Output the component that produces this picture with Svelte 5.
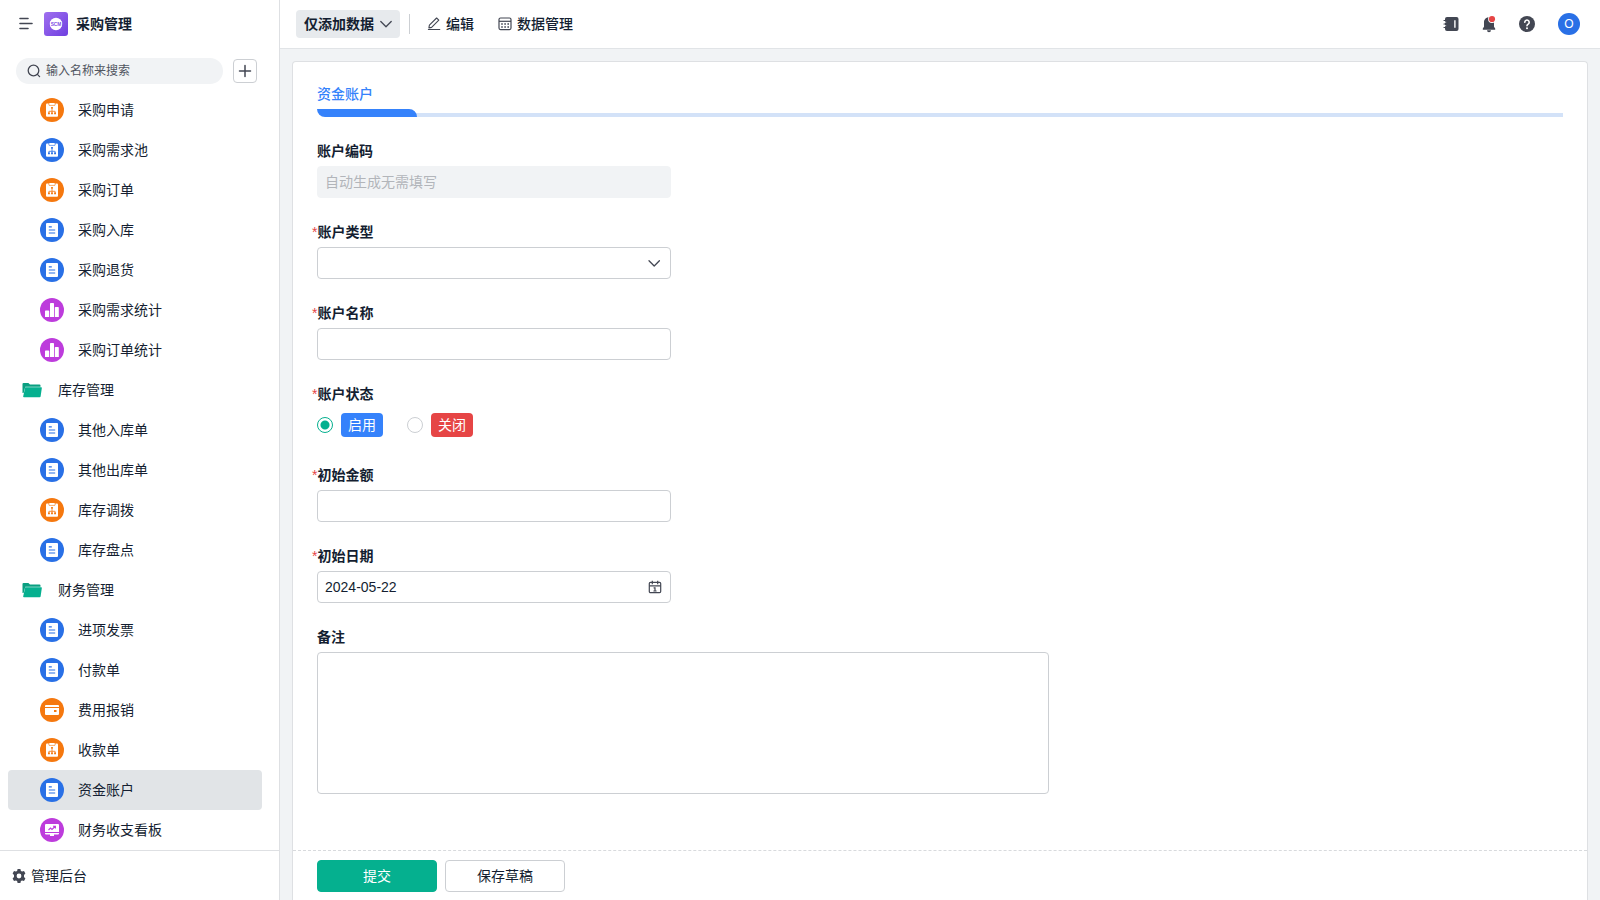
<script lang="ts">
  type IconName = 'flow' | 'form' | 'chart' | 'wallet' | 'board';
  type NavItem = { label: string; icon: IconName; color: string };
  type NavGroup = { label?: string; items: NavItem[] };

  const ORANGE = '#f5780f';
  const BLUE = '#2970e6';
  const PURPLE = '#bd3cdc';

  const groups: NavGroup[] = [
    {
      items: [
        { label: '采购申请', icon: 'flow', color: ORANGE },
        { label: '采购需求池', icon: 'flow', color: BLUE },
        { label: '采购订单', icon: 'flow', color: ORANGE },
        { label: '采购入库', icon: 'form', color: BLUE },
        { label: '采购退货', icon: 'form', color: BLUE },
        { label: '采购需求统计', icon: 'chart', color: PURPLE },
        { label: '采购订单统计', icon: 'chart', color: PURPLE }
      ]
    },
    {
      label: '库存管理',
      items: [
        { label: '其他入库单', icon: 'form', color: BLUE },
        { label: '其他出库单', icon: 'form', color: BLUE },
        { label: '库存调拨', icon: 'flow', color: ORANGE },
        { label: '库存盘点', icon: 'form', color: BLUE }
      ]
    },
    {
      label: '财务管理',
      items: [
        { label: '进项发票', icon: 'form', color: BLUE },
        { label: '付款单', icon: 'form', color: BLUE },
        { label: '费用报销', icon: 'wallet', color: ORANGE },
        { label: '收款单', icon: 'flow', color: ORANGE },
        { label: '资金账户', icon: 'form', color: BLUE },
        { label: '财务收支看板', icon: 'board', color: PURPLE }
      ]
    }
  ];

  const statusOptions = [
    { value: 'on', label: '启用', tone: 'blue' },
    { value: 'off', label: '关闭', tone: 'red' }
  ];

  let active = $state('资金账户');
  let keyword = $state('');
  let accountType = $state('');
  let accountName = $state('');
  let status = $state('on');
  let amount = $state('');
  let startDate = $state('2024-05-22');
  let remark = $state('');

  const visibleGroups = $derived(
    groups.map((group) => ({
      ...group,
      items: group.items.filter((item) => item.label.includes(keyword.trim()))
    }))
  );
</script>

{#snippet navIcon(name: IconName, color: string)}
  <svg class="nav-icon" viewBox="0 0 24 24" aria-hidden="true">
    <circle cx="12" cy="12" r="12" fill={color} />
    {#if name === 'flow'}
      <rect x="6" y="5.500" width="12" height="13.300" rx="1" fill="#fff" />
      <path fill="none" stroke={color} stroke-width=".8" d="M9 5v2.200h6V5" />
      <path fill="#fff" d="M9.400 5h5.200v1.800H9.400z" />
      <path fill="none" stroke={color} stroke-width=".8" d="M12 10.500v4.500M8.900 15v-1.700h6.200V15" />
      <path fill={color} d="M11.100 9h1.800v1.800h-1.800zM8 14.500h1.900v1.700H8zM11.050 14.500h1.900v1.700h-1.900zM14.100 14.500H16v1.700h-1.900z" />
    {:else if name === 'form'}
      <rect x="6" y="5" width="12" height="14" rx="1" fill="#fff" />
      <path stroke={color} stroke-width="1.200" d="M8.800 8.800h3M8.800 12h6.400M8.800 15h6.400" />
    {:else if name === 'chart'}
      <path fill="#fff" d="M5.800 12.500h2.600a.8.8 0 0 1 .8.800V19H5v-5.700a.8.8 0 0 1 .8-.8zM10.800 5h2.400a.8.8 0 0 1 .8.800V19h-4V5.800a.8.8 0 0 1 .8-.8zM15.600 9H18a.8.8 0 0 1 .8.800V19h-4V9.800a.8.8 0 0 1 .8-.8z" />
    {:else if name === 'wallet'}
      <path fill="#fff" d="M6 7h12a1 1 0 0 1 1 1v1H5V8a1 1 0 0 1 1-1zM5 10h14v6a1 1 0 0 1-1 1H6a1 1 0 0 1-1-1z" />
      <rect x="14" y="12" width="2.500" height="2" fill={color} />
    {:else}
      <path fill="#fff" d="M6 6h12a1 1 0 0 1 1 1v7H5V7a1 1 0 0 1 1-1zM5 15h14v.5a1 1 0 0 1-1 1h-4V18H10v-1.500H6a1 1 0 0 1-1-1z" />
      <path fill="none" stroke={color} stroke-width="1.100" d="M8.500 12l2-2 1.500 1.500L15 8.500M13 8.200h2.400v2.300" />
    {/if}
  </svg>
{/snippet}

<div class="app">
  <aside class="sidebar">
    <div class="brand">
      <button class="icon-btn" type="button" aria-label="菜单">
        <svg width="16" height="16" viewBox="0 0 16 16" fill="none" stroke="#434753" stroke-width="1.600" stroke-linecap="round">
          <path d="M2 2.500h8M2 7.500h12M2 12.500h8" />
        </svg>
      </button>
      <svg class="logo" width="24" height="24" viewBox="0 0 24 24" aria-hidden="true">
        <defs>
          <linearGradient id="logo-fill" x1="0" y1="0" x2="1" y2="1">
            <stop offset="0" stop-color="#a070ef" />
            <stop offset="1" stop-color="#6f3fe0" />
          </linearGradient>
        </defs>
        <rect width="24" height="24" rx="3" fill="url(#logo-fill)" />
        <circle cx="12" cy="12" r="6.200" fill="#fff" />
        <rect x="6" y="9.600" width="12" height="4.800" fill="#fff" />
        <text x="12" y="13.700" text-anchor="middle" font-size="4.800" font-weight="700" fill="#7f50e4">SCM</text>
      </svg>
      <strong class="brand-name">采购管理</strong>
    </div>

    <div class="search-row">
      <label class="search">
        <svg width="14" height="14" viewBox="0 0 14 14" fill="none" stroke="#434753" stroke-width="1.300" stroke-linecap="round">
          <circle cx="6.500" cy="6.500" r="5.300" />
          <path d="M10.400 10.400l2.200 2.200" />
        </svg>
        <input type="text" placeholder="输入名称来搜索" aria-label="输入名称来搜索" bind:value={keyword} />
      </label>
      <button class="add-btn" type="button" aria-label="新增">
        <svg width="14" height="14" viewBox="0 0 14 14" stroke="#434753" stroke-width="1.500" stroke-linecap="round">
          <path d="M7 1.500v11M1.500 7h11" />
        </svg>
      </button>
    </div>

    <nav class="nav">
      {#each visibleGroups as group}
        {#if group.label}
          <button class="nav-group" type="button">
            <svg width="20" height="16" viewBox="0 0 20 16" aria-hidden="true">
              <path fill="#0a9f81" d="M.5 2a1 1 0 0 1 1-1h4.900l1.600 1.600h9.500a1 1 0 0 1 1 1v1.100H3.300L1.600 11H.5z" />
              <path fill="#05b08f" d="M3.200 5.300h15.900a.7.7 0 0 1 .7.900l-1.200 8.200a1 1 0 0 1-1 .8H2a.8.8 0 0 1-.8-1z" />
            </svg>
            <span>{group.label}</span>
          </button>
        {/if}
        {#each group.items as item (item.label)}
          <a
            class="nav-item"
            class:active={active === item.label}
            href="#{item.label}"
            onclick={() => (active = item.label)}
          >
            {@render navIcon(item.icon, item.color)}
            <span>{item.label}</span>
          </a>
        {/each}
      {/each}
    </nav>

    <a class="admin-link" href="#admin">
      <svg width="14" height="14" viewBox="0 0 14 14" aria-hidden="true">
        <path
          fill="#434753"
          fill-rule="evenodd"
          d="M5.600 0h2.800l.5 1.900 1.200.7 1.900-.5 1.400 2.400L12 5.900v2.200l1.400 1.400-1.400 2.400-1.900-.5-1.200.7-.5 1.900H5.600l-.5-1.900-1.200-.7-1.900.5L.6 9.500 2 8.100V5.900L.6 4.500 2 2.100l1.900.5 1.200-.7zM7 4.600a2.400 2.400 0 1 0 0 4.800 2.400 2.400 0 0 0 0-4.800z"
        />
      </svg>
      <span>管理后台</span>
    </a>
  </aside>

  <div class="main">
    <header class="topbar">
      <button class="mode-btn" type="button">
        仅添加数据
        <svg width="12" height="8" viewBox="0 0 12 8" fill="none" stroke="#434753" stroke-width="1.300" stroke-linecap="round" stroke-linejoin="round">
          <path d="M.8 1.500L6 6.700l5.200-5.200" />
        </svg>
      </button>
      <span class="divider"></span>
      <button class="tool-btn" type="button">
        <svg width="14" height="14" viewBox="0 0 14 14" fill="none" stroke="#434753" stroke-width="1.100" stroke-linejoin="round" stroke-linecap="round">
          <path d="M1.400 12.500h11.400M2.400 8.200L9.600 1l2.200 2.200-7.200 7.200-2.700.5z" />
        </svg>
        编辑
      </button>
      <button class="tool-btn" type="button">
        <svg width="14" height="14" viewBox="0 0 14 14" fill="none" stroke="#434753" stroke-width="1.200">
          <rect x="1" y="1" width="12" height="11.600" rx="1.500" />
          <path d="M1 4.300h12" />
          <path stroke-width="1.500" stroke-dasharray="1.600 1.500" d="M3.200 7h8M3.200 10h8" />
        </svg>
        数据管理
      </button>

      <div class="top-actions">
        <button class="icon-btn" type="button" aria-label="通讯录">
          <svg width="16" height="16" viewBox="0 0 16 16">
            <rect x="2" y="1" width="13.500" height="14" rx="2" fill="#434753" />
            <path stroke="#434753" stroke-width="1.200" stroke-linecap="round" d="M1 4.500h2M1 8h2M1 11.500h2" />
            <path stroke="#fff" stroke-width=".8" d="M.8 6.200h2.400M.8 9.700h2.400" />
            <path stroke="#fff" stroke-width="1.400" d="M11.900 4.200v7.600" />
          </svg>
        </button>
        <button class="icon-btn" type="button" aria-label="消息">
          <svg width="16" height="18" viewBox="0 0 16 18">
            <path fill="#434753" d="M8 2.200c3 0 5 2.200 5 5v4.600l1.200 1.600v1.400H1.800v-1.400L3 11.800V7.200c0-2.800 2-5 5-5zM6 15.200h4a2 2 0 0 1-4 0z" />
            <circle cx="11" cy="4" r="3.900" fill="#fff" />
            <circle cx="11" cy="4" r="3.100" fill="#e64545" />
          </svg>
        </button>
        <button class="icon-btn" type="button" aria-label="帮助">
          <svg width="16" height="16" viewBox="0 0 16 16">
            <circle cx="8" cy="8" r="8" fill="#434753" />
            <path fill="none" stroke="#fff" stroke-width="1.600" stroke-linecap="round" d="M5.800 6.200a2.200 2.200 0 1 1 3.400 1.900c-.8.500-1.200.9-1.200 1.700" />
            <circle cx="8" cy="12.200" r="1" fill="#fff" />
          </svg>
        </button>
        <button class="avatar" type="button">O</button>
      </div>
    </header>

    <form class="card" onsubmit={(e) => e.preventDefault()}>
      <div class="card-body">
        <div class="tabs">
          <button class="tab" type="button">资金账户</button>
          <div class="tab-line"><span class="tab-bar"></span></div>
        </div>

        <div class="field">
          <label for="code">账户编码</label>
          <input id="code" class="control" type="text" placeholder="自动生成无需填写" disabled />
        </div>

        <div class="field">
          <label class="required" for="type">账户类型</label>
          <div class="control-wrap">
            <select id="type" class="control" bind:value={accountType}>
              <option value=""></option>
              <option value="bank">银行账户</option>
              <option value="cash">现金账户</option>
            </select>
            <svg class="suffix" width="14" height="14" viewBox="0 0 14 14" fill="none" stroke="#434753" stroke-width="1.300" stroke-linecap="round" stroke-linejoin="round">
              <path d="M1 4.800l5.200 5.200 5.200-5.200" />
            </svg>
          </div>
        </div>

        <div class="field">
          <label class="required" for="name">账户名称</label>
          <input id="name" class="control" type="text" bind:value={accountName} />
        </div>

        <div class="field" role="radiogroup" aria-labelledby="status-label">
          <span id="status-label" class="field-label required">账户状态</span>
          <div class="radios">
            {#each statusOptions as option (option.value)}
              <label class="radio">
                <input type="radio" name="status" value={option.value} bind:group={status} />
                <span class="tag {option.tone}">{option.label}</span>
              </label>
            {/each}
          </div>
        </div>

        <div class="field">
          <label class="required" for="amount">初始金额</label>
          <input id="amount" class="control" type="text" inputmode="decimal" bind:value={amount} />
        </div>

        <div class="field">
          <label class="required" for="date">初始日期</label>
          <div class="control-wrap">
            <input id="date" class="control" type="text" bind:value={startDate} />
            <svg class="suffix" width="14" height="14" viewBox="0 0 14 14" fill="none" stroke="#434753" stroke-width="1.200">
              <rect x="1.300" y="2.400" width="11.400" height="10.200" rx="1.200" />
              <path d="M1.300 5.800h11.400M4.300.8v3.400M9.700.8v3.400M5.600 7.800H7v3.200M5.400 11h3.200" />
            </svg>
          </div>
        </div>

        <div class="field wide">
          <label for="remark">备注</label>
          <textarea id="remark" class="control" bind:value={remark}></textarea>
        </div>
      </div>

      <footer class="card-footer">
        <button class="btn primary" type="submit">提交</button>
        <button class="btn" type="button">保存草稿</button>
      </footer>
    </form>
  </div>
</div>

<style>
  :global(body) {
    margin: 0;
    font-family: 'Liberation Sans', 'Noto Sans CJK SC', sans-serif;
    font-size: 14px;
    line-height: 20px;
    color: #141e31;
  }
  .app,
  .app :global(*) {
    box-sizing: border-box;
  }
  button,
  input,
  select,
  textarea {
    font: inherit;
    color: inherit;
  }
  button {
    padding: 0;
    border: 0;
    background: none;
    cursor: pointer;
  }
  svg {
    display: block;
    flex: none;
  }
  a {
    color: inherit;
    text-decoration: none;
  }
  .app {
    display: flex;
    height: 100vh;
    background: #f1f3f5;
  }

  .sidebar {
    display: flex;
    flex-direction: column;
    flex: 0 0 280px;
    border-right: 1px solid #dee0e3;
    background: #fff;
  }
  .brand {
    display: flex;
    align-items: center;
    flex: none;
    height: 48px;
    padding-left: 18px;
  }
  .logo {
    margin: 0 8px 0 10px;
  }
  .brand-name {
    font-weight: 700;
  }
  .search-row {
    display: flex;
    align-items: center;
    gap: 10px;
    flex: none;
    height: 42px;
    padding: 4px 22px 0 16px;
  }
  .search {
    display: flex;
    align-items: center;
    gap: 5px;
    flex: 1;
    height: 26px;
    padding: 0 11px;
    border-radius: 13px;
    background: #f1f3f5;
  }
  .search input {
    flex: 1;
    min-width: 0;
    padding: 0;
    border: 0;
    outline: 0;
    background: none;
    font-size: 12px;
  }
  .search input::placeholder {
    color: #50555f;
    opacity: 1;
  }
  .add-btn {
    display: grid;
    place-items: center;
    width: 24px;
    height: 24px;
    border: 1px solid #cccfd3;
    border-radius: 4px;
  }
  .nav {
    flex: 1;
    min-height: 0;
    padding: 0 17px 0 8px;
    overflow: hidden auto;
    scrollbar-width: none;
  }
  .nav-item,
  .nav-group {
    display: flex;
    align-items: center;
    gap: 14px;
    width: 100%;
    height: 40px;
    padding-left: 32px;
    border-radius: 4px;
  }
  .nav-group {
    gap: 16px;
    padding-left: 14px;
  }
  .nav-item:hover {
    background: #f1f3f5;
  }
  .nav-item.active {
    background: #e1e4e7;
  }
  .nav-icon {
    width: 24px;
    height: 24px;
  }
  .admin-link {
    display: flex;
    align-items: center;
    gap: 5px;
    flex: none;
    height: 50px;
    padding-left: 12px;
    border-top: 1px solid #dee0e3;
  }

  .main {
    display: flex;
    flex-direction: column;
    flex: 1;
    min-width: 0;
  }
  .topbar {
    display: flex;
    align-items: center;
    flex: none;
    height: 49px;
    padding: 0 20px 0 16px;
    border-bottom: 1px solid #e1e4e7;
    background: #fff;
  }
  .mode-btn {
    display: flex;
    align-items: center;
    gap: 6px;
    height: 28px;
    padding: 0 8px;
    border-radius: 4px;
    background: #e7eaed;
    font-weight: 600;
  }
  .divider {
    width: 1px;
    height: 20px;
    margin: 0 17px 0 9px;
    background: #cccfd3;
  }
  .tool-btn {
    display: flex;
    align-items: center;
    gap: 5px;
    margin-right: 24px;
    font-weight: 500;
  }
  .top-actions {
    display: flex;
    align-items: center;
    gap: 22px;
    margin-left: auto;
  }
  .avatar {
    width: 22px;
    height: 22px;
    margin-left: 1px;
    border-radius: 50%;
    background: #2970e6;
    color: #fff;
    font-size: 12px;
  }

  .card {
    display: flex;
    flex-direction: column;
    flex: 1;
    min-height: 0;
    margin: 12px 12px 0;
    border: 1px solid #dee0e3;
    border-bottom: 0;
    border-radius: 4px 4px 0 0;
    background: #fff;
  }
  .card-body {
    flex: 1;
    min-height: 0;
    padding: 22px 24px 0;
    overflow: hidden auto;
    scrollbar-width: none;
  }
  .tabs {
    margin-bottom: 24px;
  }
  .tab {
    display: block;
    margin-bottom: 5px;
    color: #3582fb;
    font-weight: 500;
  }
  .tab-line {
    display: flex;
    height: 8px;
    background: linear-gradient(#fff 50%, #d3e2f8 50%);
  }
  .tab-bar {
    width: 100px;
    border-radius: 0 8px 0 8px;
    background: #3582fb;
    box-shadow: -8px 0 0 #fff;
  }
  .field {
    display: flex;
    flex-direction: column;
    gap: 5px;
    max-width: 354px;
    margin-bottom: 24px;
  }
  .field.wide {
    max-width: 732px;
  }
  .field > label,
  .field-label {
    font-weight: 600;
  }
  .required::before {
    content: '*';
    margin-left: -5px;
    color: #e64545;
    font-weight: 400;
  }
  .control {
    display: block;
    width: 100%;
    height: 32px;
    padding: 0 7px;
    border: 1px solid #cccfd3;
    border-radius: 4px;
    outline: 0;
    background: #fff;
    appearance: none;
  }
  .control:focus {
    border-color: #05b08f;
  }
  .control:disabled {
    border-color: #f1f3f5;
    background: #f1f3f5;
  }
  .control::placeholder {
    color: #b2b5ba;
    opacity: 1;
  }
  textarea.control {
    height: 142px;
    padding: 5px 7px;
    resize: none;
  }
  .control-wrap {
    position: relative;
  }
  .suffix {
    position: absolute;
    top: 9px;
    right: 9px;
    pointer-events: none;
  }
  .radios {
    display: flex;
    align-items: center;
    gap: 24px;
    height: 32px;
  }
  .radio {
    display: flex;
    align-items: center;
    gap: 8px;
    cursor: pointer;
  }
  .radio input {
    width: 16px;
    height: 16px;
    margin: 0;
    border: 1px solid #cccfd3;
    border-radius: 50%;
    background: #fff;
    appearance: none;
  }
  .radio input:checked {
    border-color: #05b08f;
    background: radial-gradient(circle, #05b08f 4px, #fff 5px);
  }
  .tag {
    height: 24px;
    padding: 0 7px;
    border-radius: 4px;
    color: #fff;
    line-height: 24px;
  }
  .tag.blue {
    background: #3582fb;
  }
  .tag.red {
    background: #e64545;
  }
  .card-footer {
    display: flex;
    align-items: center;
    gap: 8px;
    flex: none;
    height: 50px;
    padding: 0 24px;
    border-top: 1px dashed #d8dadd;
  }
  .btn {
    width: 120px;
    height: 32px;
    border: 1px solid #cccfd3;
    border-radius: 4px;
    background: #fff;
  }
  .btn.primary {
    border-color: #05b08f;
    background: #05b08f;
    color: #fff;
  }
</style>
